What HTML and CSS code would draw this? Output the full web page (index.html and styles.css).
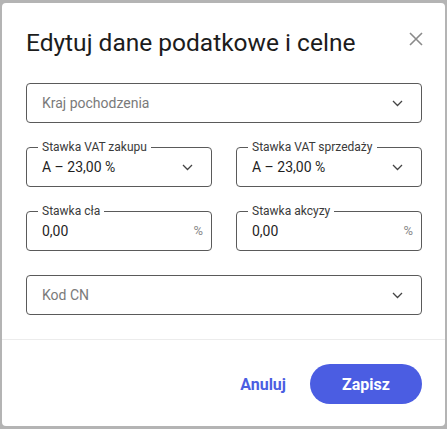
FILE: index.html
```html
<!DOCTYPE html>
<html lang="pl">
<head>
<meta charset="utf-8">
<title>Edytuj dane podatkowe i celne</title>
<link rel="stylesheet" href="styles.css">
</head>
<body>
<div class="dialog">
  <div class="dialog-body">
    <div class="header">
      <h1 class="title">Edytuj dane podatkowe i celne</h1>
      <button class="close" aria-label="Zamknij">
        <svg width="14" height="14" viewBox="0 0 14 14"><path d="M1 1L13 13M13 1L1 13" stroke="#8a8a8a" stroke-width="1.6" fill="none"/></svg>
      </button>
    </div>
    <div class="form">
      <div class="field">
        <span class="placeholder">Kraj pochodzenia</span>
        <svg class="chev" width="11" height="7" viewBox="0 0 11 7"><path d="M1 1L5.5 5.5L10 1" stroke="#444" stroke-width="1.3" fill="none"/></svg>
      </div>
      <div class="row">
        <div class="field">
          <span class="label">Stawka VAT zakupu</span>
          <span class="value">A – 23,00 %</span>
          <svg class="chev" width="11" height="7" viewBox="0 0 11 7"><path d="M1 1L5.5 5.5L10 1" stroke="#444" stroke-width="1.3" fill="none"/></svg>
        </div>
        <div class="field">
          <span class="label">Stawka VAT sprzedaży</span>
          <span class="value">A – 23,00 %</span>
          <svg class="chev" width="11" height="7" viewBox="0 0 11 7"><path d="M1 1L5.5 5.5L10 1" stroke="#444" stroke-width="1.3" fill="none"/></svg>
        </div>
      </div>
      <div class="row">
        <div class="field field-input">
          <span class="label">Stawka cła</span>
          <span class="value">0,00</span>
          <span class="suffix">%</span>
        </div>
        <div class="field field-input">
          <span class="label">Stawka akcyzy</span>
          <span class="value">0,00</span>
          <span class="suffix">%</span>
        </div>
      </div>
      <div class="field">
        <span class="placeholder">Kod CN</span>
        <svg class="chev" width="11" height="7" viewBox="0 0 11 7"><path d="M1 1L5.5 5.5L10 1" stroke="#444" stroke-width="1.3" fill="none"/></svg>
      </div>
    </div>
  </div>
  <div class="footer">
    <button class="btn-text">Anuluj</button>
    <button class="btn-primary">Zapisz</button>
  </div>
</div>
</body>
</html>
```
FILE: styles.css
```css
* { box-sizing: border-box; }
html, body { margin: 0; padding: 0; }
body {
  width: 447px;
  height: 429px;
  background: #b4b4b4;
  font-family: Roboto, "Liberation Sans", sans-serif;
  overflow: hidden;
  padding: 3px 2px 0 2px;
}
.dialog {
  width: 443px;
  height: 423px;
  background: #fff;
  border-radius: 4px;
  display: flex;
  flex-direction: column;
}
.dialog-body {
  padding: 24px 23px 24px 24px;
  border-bottom: 1px solid #ececec;
}
.header {
  display: flex;
  justify-content: space-between;
  align-items: flex-start;
  margin-bottom: 24px;
}
.title {
  margin: 0;
  font-size: 24.5px;
  line-height: 32px;
  font-weight: 400;
  color: #1c1c1c;
}
.close {
  width: 24px;
  height: 24px;
  margin-right: -6px;
  padding: 0;
  border: 0;
  background: none;
  display: flex;
  align-items: center;
  justify-content: center;
}
.form {
  display: flex;
  flex-direction: column;
  gap: 24px;
}
.row {
  display: grid;
  grid-template-columns: 1fr 1fr;
  gap: 24px;
}
.field {
  position: relative;
  height: 40px;
  border: 1px solid #5a5a5a;
  border-radius: 4px;
  display: flex;
  align-items: center;
  padding: 0 18px 0 15px;
  font-size: 14px;
  line-height: 20px;
}
.field-input { padding-right: 8px; }
.placeholder { color: #7a7a7a; flex: 1; }
.value { color: #1f1f1f; flex: 1; }
.label {
  position: absolute;
  top: -8px;
  left: 11px;
  padding: 0 4px;
  background: #fff;
  font-size: 12px;
  line-height: 14px;
  color: #3a3a3a;
  white-space: nowrap;
}
.chev { display: block; flex: none; }
.suffix { color: #8a8a8a; font-size: 13px; }
.footer {
  display: flex;
  justify-content: flex-end;
  align-items: center;
  gap: 24px;
  padding: 24px 23px 0 24px;
}
.btn-text {
  border: 0;
  background: none;
  padding: 0;
  font-family: inherit;
  font-size: 16px;
  font-weight: 700;
  color: #4b5de2;
}
.btn-primary {
  width: 112px;
  height: 40px;
  border: 0;
  border-radius: 20px;
  background: #4b5de2;
  color: #fff;
  font-family: inherit;
  font-size: 16px;
  font-weight: 700;
}
```
